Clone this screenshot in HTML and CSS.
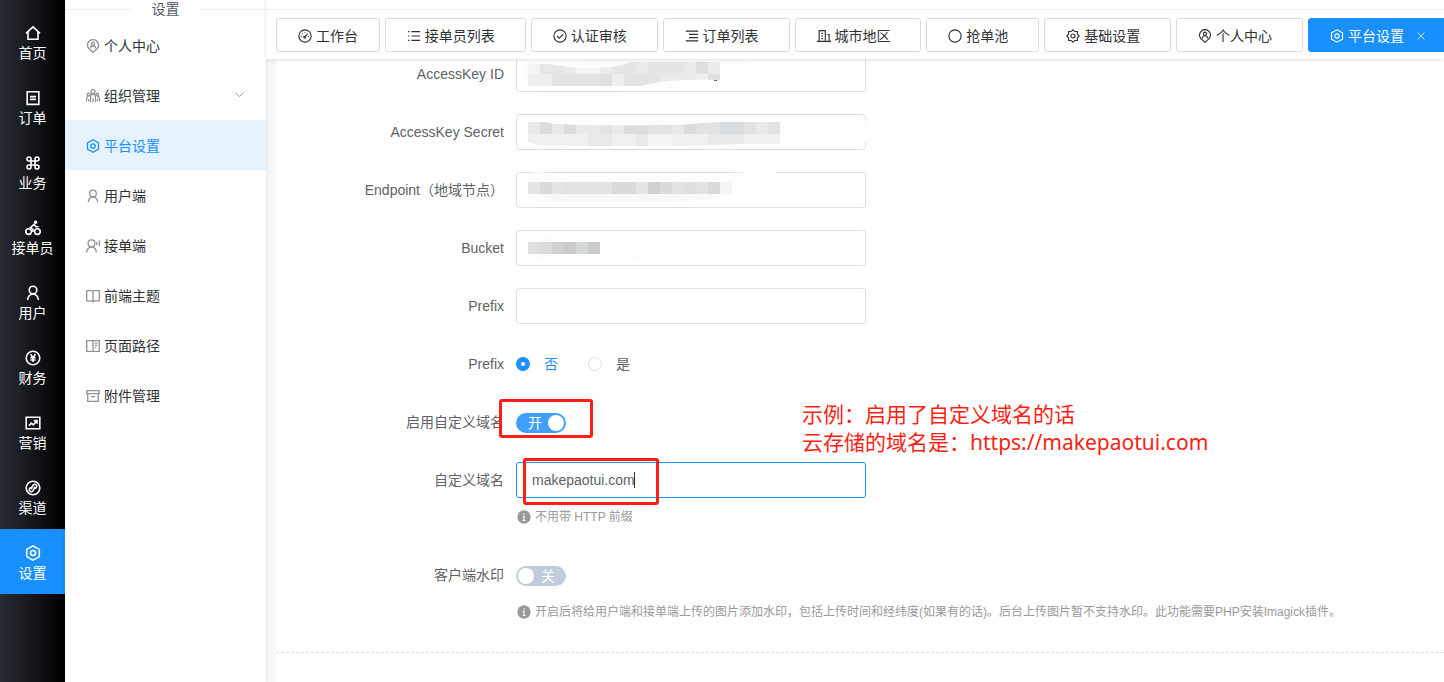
FILE: index.html
```html
<!DOCTYPE html>
<html lang="zh-CN">
<head>
<meta charset="utf-8">
<meta name="viewport" content="width=device-width, initial-scale=1">
<title>平台设置</title>
<link rel="stylesheet" href="styles.css">
</head>
<body>
<svg class="sprite" aria-hidden="true">
  <symbol id="i-home" viewBox="0 0 16 16"><path d="M1 8.4 8 1.8l7 6.6M3 7v7.2h10V7"/></symbol>
  <symbol id="i-doc" viewBox="0 0 16 16"><path d="M2.2 1.8h11.6v12.6H2.2zM5 6.6h6M5 9.4h6"/></symbol>
  <symbol id="i-cmd" viewBox="0 0 16 16"><path d="M6 6h4v4H6zM6 6V4a2 2 0 1 0-2 2zM10 6h2a2 2 0 1 0-2-2zM10 10v2a2 2 0 1 0 2-2zM6 10H4a2 2 0 1 0 2 2z"/></symbol>
  <symbol id="i-bike" viewBox="0 0 16 16"><circle cx="3.6" cy="11.6" r="2.8"/><circle cx="12.4" cy="11.6" r="2.8"/><circle cx="10.6" cy="2.2" r="1" fill="currentColor"/><path d="M8 12V9.400L5.400 7.600 9 4.400l2 2.400h2.600"/></symbol>
  <symbol id="i-user" viewBox="0 0 16 16"><circle cx="8" cy="5" r="3.8"/><path d="M2.6 15c.3-3.4 2.2-5.6 5.4-6 3.2.4 5.1 2.6 5.4 6"/></symbol>
  <symbol id="i-yen" viewBox="0 0 16 16"><circle cx="8" cy="8" r="6.8"/><path d="m5.6 4.200 2.400 3.400 2.400-3.400M8 7.600v4.400M5.400 7.800h5.200M5.400 10h5.200"/></symbol>
  <symbol id="i-trend" viewBox="0 0 16 16"><path d="M1.200 2.200h13.600v11.600H1.200zM4 10.600l2.400-2.400 1.800 1.600L11.800 6M8.800 5.600h3.200v3.200"/></symbol>
  <symbol id="i-link" viewBox="0 0 16 16"><circle cx="8" cy="8" r="6.8"/><path d="M9.200 6.200v4a2 2 0 1 1-2-2M6.800 9.800v-4a2 2 0 1 1 2 2" transform="rotate(25 8 8)"/></symbol>
  <symbol id="i-hex" viewBox="0 0 16 16"><path d="M8 .9 14.300 4.400v7.200L8 15.100 1.700 11.600V4.400z"/><circle cx="8" cy="8" r="2.500"/></symbol>
  <symbol id="i-pin" viewBox="0 0 16 16"><path d="M8 15.300 5.400 12.800A6.300 6.300 0 1 1 10.600 12.800z"/><circle cx="8" cy="5.300" r="1.800"/><path d="M4.800 10.600c.4-2 1.500-2.900 3.200-2.900s2.800.9 3.200 2.900"/></symbol>
  <symbol id="i-team" viewBox="0 0 16 16"><circle cx="8" cy="3" r="2.200"/><path d="M5.200 15V9.500C5.200 7 6.200 5.800 8 5.800s2.800 1.200 2.800 3.700V15M8 10.500V15"/><circle cx="3" cy="6.300" r="1.500"/><circle cx="13" cy="6.300" r="1.500"/><path d="M.7 14v-3c0-1.600.8-2.700 2.300-2.700M3 11.500V14M15.300 14v-3c0-1.600-.8-2.700-2.300-2.700M13 11.500V14"/></symbol>
  <symbol id="i-voice" viewBox="0 0 16 16"><circle cx="6.300" cy="5" r="3.900"/><path d="M.7 15.300c.4-3.600 2.400-6 5.600-6.400 3.200.4 5.200 2.800 5.600 6.400M12.300 3.300v3.600M15 1.500c.5 2.200.5 4.800 0 7"/></symbol>
  <symbol id="i-book" viewBox="0 0 16 16"><path d="M.8 1.800h5.700L8 2.800l1.500-1h5.700v11.700H9.500L8 14.800l-1.500-1.300H.8zM8 2.800v12"/></symbol>
  <symbol id="i-read" viewBox="0 0 16 16"><path d="M.8 1.800h14.400v12.400H.8zM8 1.800v12.400M10 4.700h3.200M10 7.300h3.200M10 9.900h1.600"/></symbol>
  <symbol id="i-box" viewBox="0 0 16 16"><path d="M1 1.800h14v3.400H1zM2 5.200v9h12v-9M5.600 8.800h4.800"/></symbol>
  <symbol id="i-gauge" viewBox="0 0 16 16"><circle cx="8" cy="8" r="7"/><path d="m8.200 8.800 2.800-3.600"/><circle cx="7.600" cy="9.400" r="1"/><path d="M3.400 8.500h1M4.900 4.900l.6.600M8 3.400v1M11.700 8.500h1"/></symbol>
  <symbol id="i-list" viewBox="0 0 16 16"><path d="M5 3h10M5 8h10M5 13h10M1.200 3h1.600M1.200 8h1.600M1.200 13h1.600"/></symbol>
  <symbol id="i-check" viewBox="0 0 16 16"><circle cx="8" cy="8" r="7"/><path d="m4.600 8 2.600 2.600 4.400-4.600"/></symbol>
  <symbol id="i-lines" viewBox="0 0 16 16"><path d="M1 2.500h14M4.500 6.200H15M4.500 9.900H15M1 13.600h14"/></symbol>
  <symbol id="i-city" viewBox="0 0 16 16"><path d="M2.500 14V1.800h7V14M9.500 6.500h1M12 6.500h1.800V14M0 14.200h16M5 5h2M5 8h2M5 11h2"/></symbol>
  <symbol id="i-ring" viewBox="0 0 16 16"><circle cx="8" cy="8" r="7"/></symbol>
  <symbol id="i-gear" viewBox="0 0 16 16"><path d="m8 .9 2.100 2h2.900v2.900l2.100 2.200-2.100 2.200v2.900h-2.900L8 15.100l-2.100-2H3v-2.900L.9 8 3 5.800V2.900h2.900z"/><circle cx="8" cy="8" r="2.300"/></symbol>
  <symbol id="i-info" viewBox="0 0 16 16"><circle cx="8" cy="8" r="7.600" fill="currentColor" stroke="none"/><path d="M8 3.600v1.800M6.600 7.200H8V12M6.400 12h3.400" stroke="#fff"/></symbol>
  <symbol id="i-down" viewBox="0 0 16 16"><path d="m2 5 6 6 6-6"/></symbol>
  <symbol id="i-close" viewBox="0 0 16 16"><path d="m2.500 2.500 11 11M13.500 2.500l-11 11"/></symbol>
</svg>

<div class="app">
  <nav class="rail" aria-label="主导航">
    <a class="rail-item" href="#"><svg class="icon"><use href="#i-home"/></svg>首页</a>
    <a class="rail-item" href="#"><svg class="icon"><use href="#i-doc"/></svg>订单</a>
    <a class="rail-item" href="#"><svg class="icon"><use href="#i-cmd"/></svg>业务</a>
    <a class="rail-item" href="#"><svg class="icon"><use href="#i-bike"/></svg>接单员</a>
    <a class="rail-item" href="#"><svg class="icon"><use href="#i-user"/></svg>用户</a>
    <a class="rail-item" href="#"><svg class="icon"><use href="#i-yen"/></svg>财务</a>
    <a class="rail-item" href="#"><svg class="icon"><use href="#i-trend"/></svg>营销</a>
    <a class="rail-item" href="#"><svg class="icon"><use href="#i-link"/></svg>渠道</a>
    <a class="rail-item active" href="#"><svg class="icon"><use href="#i-hex"/></svg>设置</a>
  </nav>

  <aside class="side">
    <h2 class="side-title">设置</h2>
    <nav aria-label="设置">
      <a class="side-item" href="#"><svg class="icon"><use href="#i-pin"/></svg>个人中心</a>
      <a class="side-item" href="#"><svg class="icon"><use href="#i-team"/></svg>组织管理<svg class="icon arrow"><use href="#i-down"/></svg></a>
      <a class="side-item active" href="#"><svg class="icon"><use href="#i-hex"/></svg>平台设置</a>
      <a class="side-item" href="#"><svg class="icon"><use href="#i-user"/></svg>用户端</a>
      <a class="side-item" href="#"><svg class="icon"><use href="#i-voice"/></svg>接单端</a>
      <a class="side-item" href="#"><svg class="icon"><use href="#i-book"/></svg>前端主题</a>
      <a class="side-item" href="#"><svg class="icon"><use href="#i-read"/></svg>页面路径</a>
      <a class="side-item" href="#"><svg class="icon"><use href="#i-box"/></svg>附件管理</a>
    </nav>
  </aside>

  <div class="main">
    <header class="head">
      <nav class="tabs" aria-label="标签页">
        <a class="tab fixed" href="#"><svg class="icon"><use href="#i-gauge"/></svg>&nbsp;工作台</a>
        <a class="tab" href="#"><svg class="icon"><use href="#i-list"/></svg>&nbsp;接单员列表</a>
        <a class="tab" href="#"><svg class="icon"><use href="#i-check"/></svg>&nbsp;认证审核</a>
        <a class="tab" href="#"><svg class="icon"><use href="#i-lines"/></svg>&nbsp;订单列表</a>
        <a class="tab" href="#"><svg class="icon"><use href="#i-city"/></svg>&nbsp;城市地区</a>
        <a class="tab" href="#"><svg class="icon"><use href="#i-ring"/></svg>&nbsp;抢单池</a>
        <a class="tab" href="#"><svg class="icon"><use href="#i-gear"/></svg>&nbsp;基础设置</a>
        <a class="tab" href="#"><svg class="icon"><use href="#i-pin"/></svg>&nbsp;个人中心</a>
        <div class="tab active"><a href="#"><svg class="icon"><use href="#i-hex"/></svg>&nbsp;平台设置</a><button class="close" type="button" aria-label="关闭"><svg class="icon"><use href="#i-close"/></svg></button></div>
      </nav>
    </header>

    <form class="form">
      <div class="row">
        <label class="label" for="key-id">AccessKey ID</label>
        <div class="field">
          <input class="input" id="key-id" type="text">
          <svg class="mosaic" viewBox="0 0 350 36">
            <path class="halo" d="M6 14Q8 5 20 4L90 3Q120 0 200 0l30 2v30H110q-60 6-90 0Q6 28 6 14z"/>
            <clipPath id="c1"><path d="M12 8h20l28 4q40 1 54-6h90v18q-46-2-80 6H12z"/></clipPath>
            <g clip-path="url(#c1)">
              <path fill="#f4f4f5" d="M12 6h12v12H12zM60 6h24v12H60z"/><path fill="#e6e6e7" d="M24 6h24v12H24zM96 6h24v12H96zM132 6h36v12h-36z"/><path fill="#eaebed" d="M48 6h12v12H48zM84 6h12v12H84zM120 6h12v12h-12zM168 6h12v12h-12zM192 6h12v12h-12z"/><path fill="#dedfe0" d="M180 6h12v12h-12zM84 18h12v12H84zM192 18h12v12h-12z"/><path fill="#efeff0" d="M12 18h24v12H12zM96 18h12v12H96zM180 18h12v12h-12z"/><path fill="#e4e4e4" d="M36 18h48v12H36zM108 18h36v12h-36z"/><path fill="#e9eaeb" d="M144 18h36v12h-36z"/>
            </g>
            <path fill="#606266" d="M198 24h3v1h-3z"/>
          </svg>
        </div>
      </div>
      <div class="row">
        <label class="label" for="key-secret">AccessKey Secret</label>
        <div class="field">
          <input class="input" id="key-secret" type="text">
          <svg class="mosaic" viewBox="0 0 350 36">
            <path class="halo" d="M5 18Q6 5 20 5h330q8 10 0 23H200q-100 6-180 3Q6 30 5 18z"/>
            <clipPath id="c2"><path d="M12 8h16l12 2q100 4 160-2h64v22h-36q-100 4-206 1l-10-3z"/></clipPath>
            <g clip-path="url(#c2)">
              <path fill="#e9e9e9" d="M12 8h12v12H12zM36 8h12v12H36zM60 8h24v12H60zM96 8h12v12H96zM156 8h12v12h-12zM240 8h12v12h-12z"/><path fill="#dcdcdd" d="M24 8h12v12H24zM48 8h12v12H48zM108 8h24v12h-24zM168 8h12v12h-12z"/><path fill="#e2e2e3" d="M84 8h12v12H84zM132 8h24v12h-24zM180 8h24v12h-24zM228 8h12v12h-12zM252 8h12v12h-12z"/><path fill="#d9dde1" d="M204 8h24v12h-24z"/><path fill="#f0f0f0" d="M12 20h60v12H12zM96 20h24v12H96zM156 20h36v12h-36zM228 20h36v12h-36z"/><path fill="#e9e9e9" d="M72 20h24v12H72zM120 20h12v12h-12zM192 20h36v12h-36z"/><path fill="#f4f5f5" d="M132 20h24v12h-24z"/>
            </g>
          </svg>
        </div>
      </div>
      <div class="row">
        <label class="label" for="endpoint">Endpoint（地域节点）</label>
        <div class="field">
          <input class="input" id="endpoint" type="text">
          <svg class="mosaic" viewBox="0 0 350 36">
            <path class="halo" d="M5 14Q6 0 22 0l18 2h160l30-2h30l8 9h-54v14q-60 10-160 8-40 0-45-9-3-2-3-8z"/>
            <path fill="#e5e5e5" d="M12 10h12v12H12zM36 10h12v12H36zM120 10h12v12h-12z"/><path fill="#dbdad9" d="M24 10h12v12H24zM96 10h24v12H96zM144 10h12v12h-12zM192 10h12v12h-12z"/><path fill="#e0e2e3" d="M48 10h48v12H48zM156 10h12v12h-12zM180 10h12v12h-12z"/><path fill="#cfd0d4" d="M132 10h12v12h-12z"/><path fill="#dfdfe0" d="M168 10h12v12h-12z"/><path fill="#f3f4f4" d="M204 10h12v12h-12z"/><path fill="#f7f8f8" d="M20 22h176v5l-56 3H40z"/>
          </svg>
        </div>
      </div>
      <div class="row">
        <label class="label" for="bucket">Bucket</label>
        <div class="field">
          <input class="input" id="bucket" type="text">
          <svg class="mosaic" viewBox="0 0 350 36">
            <path class="halo" d="M6 14Q8 3 22 4l18 4h85q10-2 16 4v12q-10 6-40 6H30Q6 28 6 14z"/>
            <path fill="#dfdfde" d="M12 12h12v12H12z"/><path fill="#dadadb" d="M24 12h12v12H24z"/><path fill="#cfd0d4" d="M36 12h12v12H36z"/><path fill="#cacacb" d="M48 12h12v12H48zM72 12h12v12H72z"/><path fill="#d5d9da" d="M60 12h12v12H60z"/>
          </svg>
        </div>
      </div>
      <div class="row">
        <label class="label" for="prefix">Prefix</label>
        <div class="field"><input class="input" id="prefix" type="text"></div>
      </div>
      <div class="row" role="radiogroup" aria-labelledby="prefix-mode">
        <span class="label" id="prefix-mode">Prefix</span>
        <div class="radios">
          <label class="radio"><input type="radio" name="mode" checked><span>否</span></label>
          <label class="radio"><input type="radio" name="mode"><span>是</span></label>
        </div>
      </div>
      <div class="row">
        <label class="label" for="use-domain">启用自定义域名</label>
        <div class="toggle">
          <input class="switch" id="use-domain" type="checkbox" role="switch" checked>
          <span class="switch-text on">开</span>
          <span class="mark mark-switch"></span>
        </div>
        <p class="note">示例：启用了自定义域名的话<br>云存储的域名是：https://makepaotui.com</p>
      </div>
      <div class="row with-hint">
        <label class="label" for="domain">自定义域名</label>
        <div class="field">
          <input class="input focused" id="domain" type="text" value="makepaotui.com">
          <span class="caret"></span>
          <span class="mark mark-domain"></span>
        </div>
        <p class="hint"><svg class="icon"><use href="#i-info"/></svg>不用带 HTTP 前缀</p>
      </div>
      <div class="row with-hint">
        <label class="label" for="watermark">客户端水印</label>
        <div class="toggle">
          <input class="switch" id="watermark" type="checkbox" role="switch">
          <span class="switch-text off">关</span>
        </div>
        <p class="hint"><svg class="icon"><use href="#i-info"/></svg>开启后将给用户端和接单端上传的图片添加水印，包括上传时间和经纬度(如果有的话)。后台上传图片暂不支持水印。此功能需要PHP安装Imagick插件。</p>
      </div>
      <hr class="divider">
    </form>
  </div>
</div>
</body>
</html>
```
FILE: styles.css
```css
* { box-sizing: border-box; }

body {
  margin: 0;
  font: 14px/20px "Liberation Sans", "Noto Sans CJK SC", sans-serif;
  color: #303133;
}

a { color: inherit; text-decoration: none; }
p { margin: 0; }
.sprite { display: none; }

.icon {
  width: 14px;
  height: 14px;
  flex: none;
  fill: none;
  stroke: currentColor;
  stroke-width: 1.3;
}

.app {
  display: flex;
  height: 100vh;
  overflow: hidden;
  background: #f5f7fa;
}

/* Dark rail */
.rail {
  flex: none;
  width: 65px;
  padding-top: 9px;
  background: linear-gradient(90deg, #282c34, #000);
  color: #fff;
}
.rail-item {
  display: flex;
  flex-direction: column;
  align-items: center;
  gap: 2px;
  height: 65px;
  padding-top: 16px;
}
.rail-item .icon { width: 16px; height: 16px; stroke-width: 1.6; }
.rail-item.active { background: #1890ff; }

/* Section menu */
.side {
  flex: none;
  width: 201px;
  background: #fff;
  box-shadow: 0 0 4px rgba(0, 0, 0, .12);
}
.side-title {
  display: flex;
  align-items: center;
  justify-content: space-between;
  gap: 20px;
  height: 18px;
  margin: 0 0 2px;
  font-size: 14px;
  font-weight: 400;
  color: #515a6e;
}
.side-title::before,
.side-title::after {
  content: "";
  flex: 1;
  height: 1px;
  background: #ebeef2;
}
.side-item {
  display: flex;
  align-items: center;
  gap: 4px;
  height: 50px;
  padding: 2px 21px 0;
}
.side-item .icon { color: #909399; stroke-width: 1.5; }
.side-item.active { background: #e6f3ff; }
.side-item.active,
.side-item.active .icon { color: #1890ff; }
.side-item .arrow { width: 11px; height: 11px; margin: -4px 0 0 auto; stroke-width: 1.3; }

/* Tabs */
.main { flex: 1; min-width: 0; }
.head {
  position: relative;
  z-index: 1;
  padding-top: 9px;
  background: #fff;
  box-shadow: 0 1px 4px rgba(0, 0, 0, .12);
}
.tabs {
  display: flex;
  gap: 5px;
  padding: 8px 10px 7px;
  border-top: 1px solid #f0f0f0;
  overflow: hidden;
}
.tab {
  display: flex;
  flex: none;
  align-items: center;
  height: 34px;
  padding: 2px 30px 0 21px;
  border: 1px solid #d8dce5;
  border-radius: 3px;
  white-space: nowrap;
}
.tab.fixed { padding-right: 21px; }
.tab a { display: flex; align-items: center; }
.tab.active { border-color: #1890ff; background: #1890ff; color: #fff; }
.close {
  display: flex;
  margin-left: 12px;
  padding: 0;
  border: 0;
  background: none;
  color: inherit;
}
.close .icon { width: 10px; height: 10px; }

/* Form, scrolled slightly under the tab bar */
.form {
  min-height: 100%;
  margin: -3px 0 0 10px;
  background: #fff;
}
.row {
  display: grid;
  grid-template-columns: 228px minmax(0, 350px) minmax(0, 1fr);
  column-gap: 12px;
  align-items: center;
  min-height: 36px;
  margin-bottom: 22px;
}
.label { line-height: 36px; text-align: right; color: #606266; }
.field { position: relative; }
.input {
  display: block;
  width: 100%;
  height: 36px;
  padding: 0 15px;
  border: 1px solid #dcdfe6;
  border-radius: 3px;
  outline: 0;
  font: inherit;
  color: #606266;
}
.input.focused { border-color: #1890ff; }
.caret {
  position: absolute;
  top: 10px;
  left: 118px;
  width: 1px;
  height: 16px;
  background: #303133;
}
.mosaic {
  position: absolute;
  inset: 0;
  width: 100%;
  height: 100%;
  overflow: visible;
  pointer-events: none;
}
.halo { fill: #fdfdfd; }

.radios { display: flex; gap: 30px; color: #606266; }
.radio { display: flex; align-items: center; gap: 14px; }
.radio input {
  appearance: none;
  width: 14px;
  height: 14px;
  margin: 0;
  border: 1px solid #dcdfe6;
  border-radius: 50%;
}
.radio input:checked { border: 5px solid #1890ff; }
.radio input:checked + span { color: #1890ff; }

.toggle { position: relative; justify-self: start; padding-top: 2px; }
.switch {
  appearance: none;
  display: block;
  width: 50px;
  height: 20px;
  margin: 0;
  padding: 2px;
  border-radius: 10px;
  background: #c0ccda;
}
.switch::before {
  content: "";
  display: block;
  width: 16px;
  height: 16px;
  border-radius: 50%;
  background: #fff;
}
.switch:checked { background: #409eff; }
.switch:checked::before { margin-left: auto; }
.switch-text { position: absolute; top: 2px; color: #fff; pointer-events: none; }
.switch-text.on { left: 12px; }
.switch-text.off { right: 11px; }

.with-hint { margin-bottom: 31px; row-gap: 10px; }
.hint {
  grid-column: 2 / -1;
  display: flex;
  align-items: center;
  gap: 4px;
  padding-left: 1px;
  font-size: 12px;
  line-height: 18px;
  color: #999;
}

.divider { margin: 0; border: 0; border-top: 1px dashed #dcdfe6; }

/* Red annotations */
.mark {
  position: absolute;
  border: 3px solid #ff1e14;
  border-radius: 3px;
  pointer-events: none;
}
.mark-switch { inset: -12px -27px -5px -17px; }
.mark-domain { top: -4px; bottom: -7px; left: 7px; width: 136px; }
.note {
  position: absolute;
  top: 400px;
  left: 802px;
  font: 21px/28px "Noto Sans", "Noto Sans CJK SC", sans-serif;
  color: #ff1e14;
}
```
